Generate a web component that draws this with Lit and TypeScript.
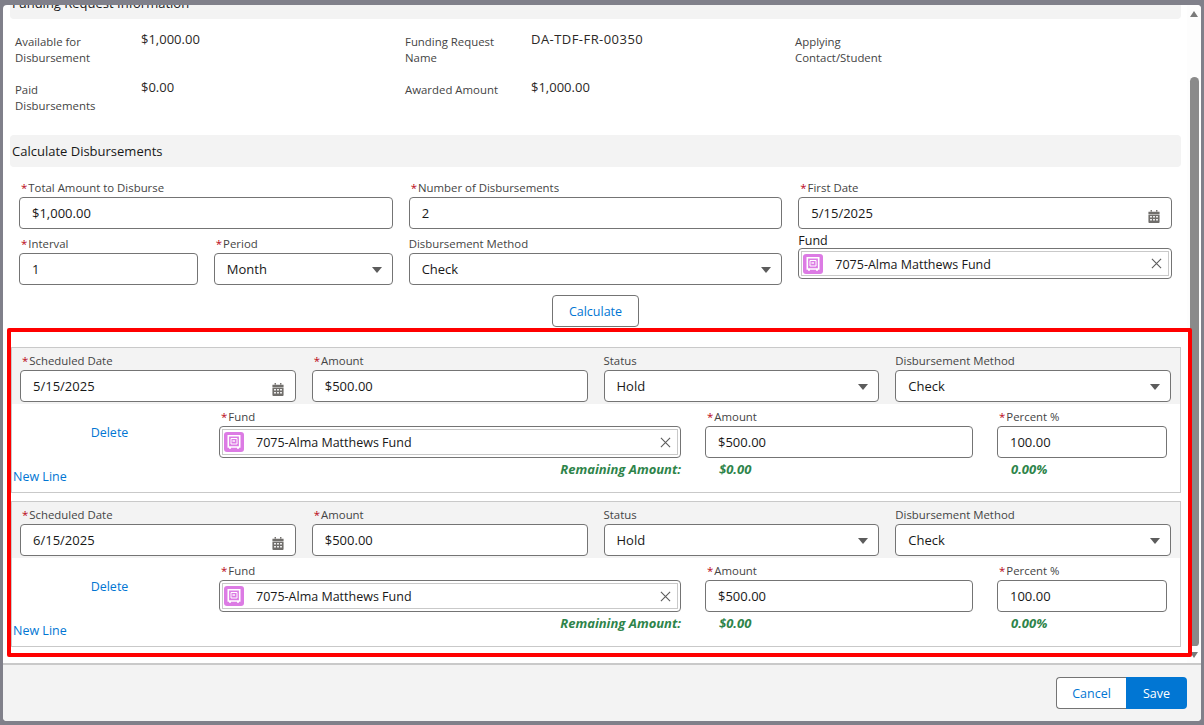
import { LitElement, html, css } from 'lit';
import { customElement } from 'lit/decorators.js';

const calendarIcon = html`
  <svg class="cal" viewBox="0 0 14 14" width="12" height="13" preserveAspectRatio="none">
    <path fill="#706e6b" d="M3 0h1.6v1.6H3zM9.4 0H11v1.6H9.4zM.5 2h13v2.5H.5zM.5 5.2h13V13a1 1 0 0 1-1 1h-11a1 1 0 0 1-1-1z" />
    <path fill="#fff" d="M2.5 6.5h2v1.7h-2zM6 6.5h2v1.7H6zM9.5 6.5h2v1.7h-2zM2.5 9.6h2v1.7h-2zM6 9.6h2v1.7H6zM9.5 9.6h2v1.7h-2z" />
  </svg>
`;

const fundIcon = html`
  <span class="fund-icon">
    <svg viewBox="0 0 20 20" width="20" height="20">
      <path fill="none" stroke="#fff" stroke-width="1.6" d="M4.3 3.8h11.4v11.2H4.3z" />
      <path fill="#fff" d="M5 15h2v1.7H5zM13 15h2v1.7h-2z" />
      <path fill="none" stroke="#fff" stroke-width="1" d="M7 6.5h6v5.5H7z" />
      <path fill="#fff" d="M8.5 8.3h2.5v1.4H8.5z" />
    </svg>
  </span>
`;

@customElement('app-root')
export class AppRoot extends LitElement {
  static styles = css`
    :host {
      display: block;
      height: 725px;
      box-sizing: border-box;
      padding: 5px 3px 4px;
      overflow: hidden;
      background: #80808a;
      font-family: 'Open Sans', 'Noto Sans', sans-serif;
      font-size: 12.5px;
      line-height: 16px;
      color: #181818;
    }
    .modal {
      height: 716px;
      display: flex;
      flex-direction: column;
      background: #fff;
      border-radius: 4px;
      overflow: hidden;
    }
    .main {
      height: 658px;
      display: flex;
      overflow: hidden;
    }
    .content {
      flex: 1;
      min-width: 0;
      height: 658px;
      position: relative;
      z-index: 1;
    }

    /* scrolled, so the first heading is cut by the modal top */
    .heading {
      margin: 0 6px 0 7px;
      padding: 0 2px;
      background: #f3f3f3;
      border-radius: 4px;
      font-size: 13px;
      line-height: 32px;
      height: 32px;
    }
    .heading.top {
      margin-top: -18px;
    }
    .info {
      display: grid;
      grid-template-columns: repeat(3, 390px);
      grid-auto-rows: 48px;
      padding: 15px 0 0 12px;
      height: 101px;
    }
    .pair {
      display: grid;
      grid-template-columns: 126px 1fr;
      color: #444;
      font-size: 11.4px;
    }
    .pair b {
      font-weight: 400;
      color: #2b2826;
      font-size: 13px;
      margin-top: -3px;
    }
    .pair b.code {
      letter-spacing: 0.45px;
    }
    .pair span {
      width: 105px;
    }

    label {
      display: block;
      height: 16px;
      box-sizing: border-box;
      padding-top: 1px;
      color: #444;
      font-size: 11.4px;
      line-height: 16px;
      white-space: nowrap;
    }
    label i {
      font-style: normal;
      color: #ba0517;
      margin: 0 1px 0 2px;
    }
    .box {
      height: 32px;
      box-sizing: border-box;
      margin-top: 2px;
      border: 1px solid #747474;
      border-radius: 4px;
      background: #fff;
      display: flex;
      align-items: center;
      justify-content: space-between;
      padding: 0 12px;
      font-size: 13px;
      white-space: nowrap;
    }
    .cal {
      margin-top: 6px;
      margin-right: -1px;
    }
    .arrow {
      width: 0;
      height: 0;
      border-left: 5px solid transparent;
      border-right: 5px solid transparent;
      border-top: 6px solid #5c5c5c;
      margin-top: 2px;
      margin-right: -2px;
    }
    .lookup {
      padding: 2px;
    }
    .lookup-inner {
      flex: 1;
      align-self: stretch;
      border: 1px solid #c9c9c9;
      display: flex;
      align-items: center;
      padding: 0 6px 0 1px;
      gap: 12px;
    }
    .fund-icon {
      width: 20px;
      height: 20px;
      border-radius: 3px;
      background: #dc7be4;
      display: block;
      flex: none;
    }
    .fund-icon svg {
      display: block;
    }
    .lookup-inner .name {
      flex: 1;
      font-size: 12.5px;
      padding-top: 2px;
    }
    .close {
      display: block;
      flex: none;
    }

    .calc {
      display: grid;
      grid-template-columns: repeat(12, 1fr);
      column-gap: 16px;
      row-gap: 6px;
      padding: 12px 0 0 16px;
      width: 1169px;
      box-sizing: border-box;
    }
    .span4 { grid-column: span 4; }
    .span2 { grid-column: span 2; }
    label.fund-label {
      color: #181818;
      font-size: 12.5px;
    }
    .plain-fund {
      margin-top: -3px;
    }
    .plain-fund .box {
      margin-top: 0;
      height: 31px;
    }
    .calc-action {
      display: flex;
      justify-content: center;
      margin: 10px 0 1px;
      padding-left: 1px;
    }
    .btn {
      height: 32px;
      box-sizing: border-box;
      padding-top: 2px;
      border: 1px solid #747474;
      border-radius: 4px;
      background: #fff;
      color: #0176d3;
      font-size: 12.5px;
      display: flex;
      align-items: center;
      justify-content: center;
    }
    .calc-action .btn {
      width: 87px;
    }

    .lines {
      margin-left: 4px;
      width: 1185px;
      height: 329px;
      box-sizing: border-box;
      border: 4px solid #f00;
      border-radius: 2px;
      padding-top: 15px;
      display: flex;
      flex-direction: column;
      gap: 8px;
      background: #fff;
    }
    .line {
      width: 1170px;
      height: 146px;
      box-sizing: border-box;
      border: 1px solid #c9c9c9;
    }
    .line-head {
      height: 56px;
      background: #f3f3f3;
      display: grid;
      grid-template-columns: repeat(4, 1fr);
      column-gap: 16px;
      padding: 4px 9px 0 8px;
      box-sizing: border-box;
      margin-bottom: 4px;
    }
    .line-fund {
      display: grid;
      grid-template-columns: 183px 462px 268px 170px;
      column-gap: 24px;
    }
    .delete {
      padding: 17px 0 0 12px;
      color: #0176d3;
      text-align: center;
    }
    .line-totals {
      display: grid;
      grid-template-columns: 669px 330px 1fr;
      margin-top: 3px;
      height: 16px;
      color: #2e844a;
      font-weight: 700;
      font-style: italic;
      font-size: 13px;
    }
    .remaining {
      text-align: right;
    }
    .sum {
      padding-left: 38px;
    }
    .new-line {
      color: #0176d3;
      padding-left: 1px;
      margin-top: -8px;
    }

    .track {
      width: 14px;
      flex: none;
      background: #fdfdfd;
      display: flex;
      flex-direction: column;
      align-items: center;
    }
    .up {
      width: 0;
      height: 0;
      margin-top: 6px;
      border-left: 4.5px solid transparent;
      border-right: 4.5px solid transparent;
      border-bottom: 6px solid #7a7a7a;
    }
    .thumb {
      width: 9px;
      height: 569px;
      margin-top: 60px;
      background: #8a8a8a;
      border-radius: 5px 5px 4px 4px;
    }
    .down {
      width: 0;
      height: 0;
      margin-top: 6px;
      border-left: 4.5px solid transparent;
      border-right: 4.5px solid transparent;
      border-top: 6px solid #7a7a7a;
    }

    .footer {
      flex: 1;
      background: #f3f3f3;
      border-top: 2px solid #c9c9c9;
      display: flex;
      justify-content: flex-end;
      align-items: flex-start;
      padding: 12px 14px 0 0;
    }
    .footer .btn.cancel {
      width: 70px;
      border-radius: 4px 0 0 4px;
      border-right: none;
    }
    .footer .btn.save {
      width: 61px;
      border: none;
      border-radius: 0 4px 4px 0;
      background: #0176d3;
      color: #fff;
    }
  `;

  private _label(text: string, required = true) {
    return html`<label>${required ? html`<i>*</i>` : ''}${text}</label>`;
  }

  private _lookup() {
    return html`
      <div class="box lookup">
        <div class="lookup-inner">
          ${fundIcon}
          <span class="name">7075-Alma Matthews Fund</span>
          <svg class="close" viewBox="0 0 12 12" width="11" height="11">
            <path stroke="#5c5c5c" stroke-width="1.2" d="M1 1l10 10M11 1L1 11" />
          </svg>
        </div>
      </div>
    `;
  }

  private _line(date: string) {
    return html`
      <div class="line">
        <div class="line-head">
          <div>
            ${this._label('Scheduled Date')}
            <div class="box">${date}${calendarIcon}</div>
          </div>
          <div>
            ${this._label('Amount')}
            <div class="box">$500.00</div>
          </div>
          <div>
            ${this._label('Status', false)}
            <div class="box">Hold<span class="arrow"></span></div>
          </div>
          <div>
            ${this._label('Disbursement Method', false)}
            <div class="box">Check<span class="arrow"></span></div>
          </div>
        </div>
        <div class="line-fund">
          <div class="delete">Delete</div>
          <div>${this._label('Fund')}${this._lookup()}</div>
          <div>
            ${this._label('Amount')}
            <div class="box">$500.00</div>
          </div>
          <div>
            ${this._label('Percent %')}
            <div class="box">100.00</div>
          </div>
        </div>
        <div class="line-totals">
          <span class="remaining">Remaining Amount:</span>
          <span class="sum">$0.00</span>
          <span>0.00%</span>
        </div>
        <div class="new-line">New Line</div>
      </div>
    `;
  }

  render() {
    return html`
      <div class="modal">
        <div class="main">
          <div class="content">
            <div class="heading top">Funding Request Information</div>
            <div class="info">
              <div class="pair"><span>Available for Disbursement</span><b>$1,000.00</b></div>
              <div class="pair"><span>Funding Request Name</span><b class="code">DA-TDF-FR-00350</b></div>
              <div class="pair"><span>Applying Contact/Student</span><b></b></div>
              <div class="pair"><span>Paid Disbursements</span><b>$0.00</b></div>
              <div class="pair"><span>Awarded Amount</span><b>$1,000.00</b></div>
            </div>
            <div class="heading">Calculate Disbursements</div>
            <div class="calc">
              <div class="span4">
                ${this._label('Total Amount to Disburse')}
                <div class="box">$1,000.00</div>
              </div>
              <div class="span4">
                ${this._label('Number of Disbursements')}
                <div class="box">2</div>
              </div>
              <div class="span4">
                ${this._label('First Date')}
                <div class="box">5/15/2025${calendarIcon}</div>
              </div>
              <div class="span2">
                ${this._label('Interval')}
                <div class="box">1</div>
              </div>
              <div class="span2">
                ${this._label('Period')}
                <div class="box">Month<span class="arrow"></span></div>
              </div>
              <div class="span4">
                ${this._label('Disbursement Method', false)}
                <div class="box">Check<span class="arrow"></span></div>
              </div>
              <div class="span4 plain-fund">
                <label class="fund-label">Fund</label>
                ${this._lookup()}
              </div>
            </div>
            <div class="calc-action"><div class="btn">Calculate</div></div>
            <div class="lines">
              ${this._line('5/15/2025')}
              ${this._line('6/15/2025')}
            </div>
          </div>
          <div class="track">
            <span class="up"></span>
            <span class="thumb"></span>
            <span class="down"></span>
          </div>
        </div>
        <div class="footer">
          <div class="btn cancel">Cancel</div>
          <div class="btn save">Save</div>
        </div>
      </div>
    `;
  }
}
